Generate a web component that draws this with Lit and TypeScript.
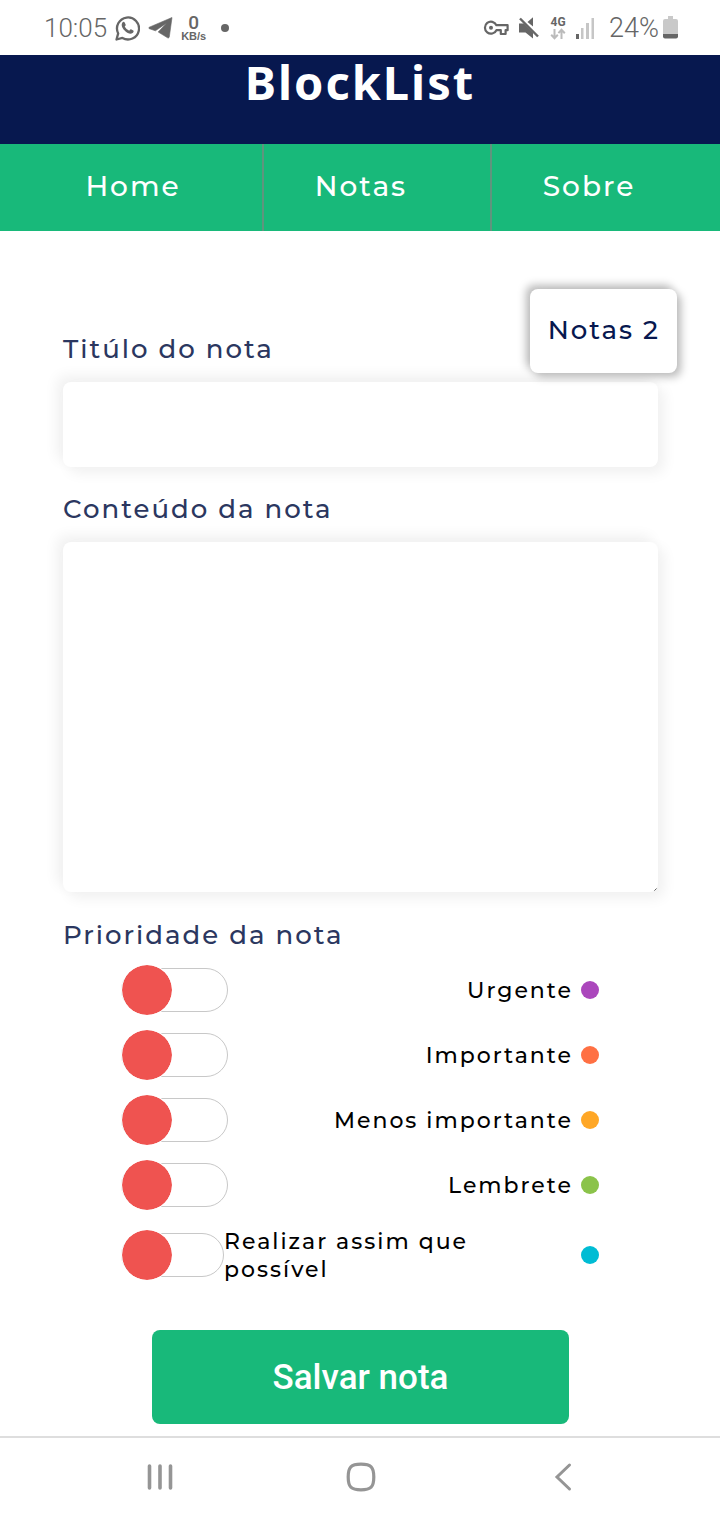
import { LitElement, html, css } from "lit";
import { customElement, state } from "lit/decorators.js";
import { classMap } from "lit/directives/class-map.js";

interface Priority {
  id: string;
  label: string;
}

const PRIORITIES: Priority[] = [
  { id: "urgente", label: "Urgente" },
  { id: "importante", label: "Importante" },
  { id: "menos", label: "Menos importante" },
  { id: "lembrete", label: "Lembrete" },
  { id: "possivel", label: "Realizar assim que possível" },
];

@customElement("status-bar")
class StatusBar extends LitElement {
  static styles = css`
    :host {
      display: flex;
      justify-content: space-between;
      align-items: center;
      box-sizing: border-box;
      height: 55px;
      padding: 0 42px 0 44px;
      background: #fff;
      color: #666;
      font-family: Roboto, sans-serif;
    }
    .group {
      display: flex;
      align-items: center;
    }
    .left {
      gap: 8px;
    }
    .right {
      gap: 9px;
    }
    .time {
      font-size: 26px;
      line-height: 32px;
      font-weight: 300;
    }
    .charge {
      display: flex;
      align-items: center;
      gap: 4px;
      padding-left: 5px;
      font-size: 27px;
      line-height: 32px;
      font-weight: 300;
    }
    .rate {
      display: flex;
      flex-direction: column;
      align-items: center;
      font-family: "Liberation Sans", sans-serif;
      font-weight: 700;
      font-size: 11px;
      line-height: 10px;
    }
    .rate b {
      font-family: Roboto, sans-serif;
      font-weight: 500;
      font-size: 19px;
      line-height: 17px;
    }
    .dot {
      width: 8px;
      height: 8px;
      margin-left: 7px;
      border-radius: 50%;
      background: #666;
    }
    .network {
      display: flex;
      flex-direction: column;
      align-items: center;
      padding-left: 1px;
      font-weight: 700;
      font-size: 12px;
      line-height: 12px;
    }
    svg {
      display: block;
    }
  `;

  render() {
    return html`
      <div class="group left">
        <span class="time">10:05</span>
        <svg width="25" height="26" viewBox="0 0 25 26" fill="none">
          <path d="M1.5 24.5 3.2 18.4A11 11 0 1 1 7.4 22.9Z" stroke="#666" stroke-width="2.3" stroke-linejoin="round" />
          <path d="M7.4 7.6C8.2 6.5 9.3 6.7 9.8 7.7L10.7 9.7C10.9 10.4 10 11.1 9.7 11.6C10.8 13.6 12.1 14.8 14.2 15.7C14.8 15.1 15.3 14.1 16 14.3L18.3 15.5C19 16 18.5 17.5 17.6 18.1C15.4 19.5 12.5 18.2 10.3 16.3C8 14.2 5.4 10.6 7.4 7.6Z" fill="#666" />
        </svg>
        <svg width="25" height="24" viewBox="0 0 25 24">
          <path d="M24 1.5 1.3 11.2C.6 11.6.7 12.4 1.4 12.7L7.4 14.8 18.5 7.2 10.2 16 19.6 21.8C20.4 22.2 21.1 21.8 21.3 20.9Z" fill="#666" stroke="#666" stroke-width=".6" />
        </svg>
        <span class="rate"><b>0</b>KB/s</span>
        <span class="dot"></span>
      </div>
      <div class="group right">
        <svg width="26" height="18" viewBox="0 0 26 18" fill="none">
          <path d="M13.4 6.2H24.6V11.2H22.6V15H17.8V11.2H13.4A6 6 0 1 1 13.4 6.2Z" stroke="#666" stroke-width="2.2" stroke-linejoin="round" />
          <circle cx="8" cy="8.7" r="2" fill="#666" />
        </svg>
        <svg width="22" height="24" viewBox="0 0 22 24">
          <path d="M1 7.5H6L15 16.5V22.5L7.5 16.5H1ZM9.5 6 15 1.2V10.5Z" fill="#666" />
          <path d="M2 2.5 20 20.5" stroke="#666" stroke-width="2.4" />
        </svg>
        <span class="network">
          4G
          <svg width="16" height="12" viewBox="0 0 16 12" fill="none" stroke="#bbb" stroke-width="2">
            <path d="M4.5 1V10M1.2 6.8 4.5 10.2 7.8 6.8M11.5 11V2M8.4 5.2 11.5 1.8 14.8 5.2" />
          </svg>
        </span>
        <svg width="20" height="22" viewBox="0 0 20 22">
          <rect x="1" y="17" width="3" height="5" fill="#666" />
          <path d="M6 11H8.5V22H6ZM11 6H14V22H11ZM16.5 1H19V22H16.5Z" fill="#c6c6c6" />
        </svg>
        <span class="charge">
          24%
          <svg width="15" height="23" viewBox="0 0 15 23">
            <path d="M5 0H10V3H13A2 2 0 0 1 15 5V18H0V5A2 2 0 0 1 2 3H5Z" fill="#c9c9c9" />
            <path d="M0 18H15V20.5A2 2 0 0 1 13 22.5H2A2 2 0 0 1 0 20.5Z" fill="#666" />
          </svg>
        </span>
      </div>
    `;
  }
}

@customElement("system-nav")
class SystemNav extends LitElement {
  static styles = css`
    :host {
      display: grid;
      grid-template-columns: repeat(3, 1fr);
      box-sizing: border-box;
      height: 84px;
      padding: 0 56px 4px 59px;
      border-top: 2px solid #dedede;
      background: #fff;
    }
    button {
      display: grid;
      place-items: center;
      padding: 0;
      border: 0;
      background: none;
    }
    svg {
      display: block;
      fill: none;
      stroke: #959595;
    }
  `;

  render() {
    return html`
      <button type="button" aria-label="Recentes">
        <svg width="30" height="30" viewBox="0 0 30 30" stroke-width="3.6" stroke-linecap="round">
          <path d="M4.5 4V26M15 4V26M25.5 4V26" />
        </svg>
      </button>
      <button type="button" aria-label="Início">
        <svg width="30" height="30" viewBox="0 0 30 30" stroke-width="3.2">
          <path d="M15 2.2C25 2.2 27.8 5 27.8 15S25 27.8 15 27.8 2.2 25 2.2 15 5 2.2 15 2.2Z" />
        </svg>
      </button>
      <button type="button" aria-label="Voltar">
        <svg width="18" height="30" viewBox="0 0 18 30" stroke-width="3" stroke-linecap="round">
          <path d="M15.5 3 3 15 15.5 27" />
        </svg>
      </button>
    `;
  }
}

@customElement("app-root")
class AppRoot extends LitElement {
  @state() private selected = "";

  static styles = css`
    :host {
      display: flex;
      flex-direction: column;
      min-height: 100vh;
      background: #fff;
      color: #07184f;
      font-family: Montserrat, Inter, sans-serif;
      font-weight: 500;
      letter-spacing: 2px;
    }
    status-bar,
    system-nav {
      letter-spacing: normal;
    }
    header {
      box-sizing: border-box;
      height: 89px;
      background: #07184f;
      color: #fff;
      text-align: center;
    }
    h1 {
      margin: 0;
      font-family: "M PLUS Rounded 1c", "Noto Sans", sans-serif;
      font-size: 47px;
      line-height: 55px;
      font-weight: 700;
    }
    .menu {
      display: grid;
      grid-template-columns: repeat(3, 1fr);
      padding-left: 36px;
      background: #18b97a;
    }
    .menu a {
      padding: 24px 32px 27px 0;
      border-right: 2px solid #5f957e;
      color: #fff;
      font-size: 28px;
      line-height: 36px;
      text-align: center;
      text-decoration: none;
    }
    .menu a:last-child {
      border-right-color: transparent;
    }
    main {
      position: relative;
      flex: 1;
      padding: 100px 62px 12px 63px;
    }
    .count {
      position: absolute;
      top: 58px;
      right: 43px;
      box-sizing: border-box;
      padding: 23px 17px 25px 18px;
      border-radius: 8px;
      background: #fff;
      box-shadow: 4px 4px 8px #bbb, -4px -4px 8px #bbb;
      font-size: 26px;
      line-height: 36px;
    }
    form {
      display: flex;
      flex-direction: column;
    }
    .caption {
      margin: 0;
      padding: 0;
      color: #2b3760;
      font-size: 26px;
      line-height: 36px;
    }
    .field {
      box-sizing: border-box;
      width: 100%;
      margin: 15px 0 24px;
      padding: 16px;
      border: 0;
      border-radius: 8px;
      outline: 0;
      background: #fff;
      box-shadow: 6px 6px 14px #f0f0f0, -6px -6px 14px #f0f0f0;
      font: inherit;
      font-size: 26px;
      letter-spacing: inherit;
      color: inherit;
    }
    input.field {
      height: 85px;
    }
    textarea.field {
      display: block;
      height: 350px;
      margin-bottom: 25px;
      resize: none;
      background: #fff
        url("data:image/svg+xml,%3Csvg xmlns='http://www.w3.org/2000/svg' width='3' height='3'%3E%3Cpath d='M2 0h1v1H2zM1 1h1v1H1zM0 2h1v1H0zM2 2h1v1H2z' fill='%23444'/%3E%3C/svg%3E")
        right 1px bottom 1px no-repeat;
    }
    .options {
      display: flex;
      flex-direction: column;
      gap: 15px;
      padding: 12px 59px 0 58px;
      color: #000;
    }
    .option {
      display: flex;
      align-items: center;
      min-height: 50px;
    }
    .option label {
      margin-left: auto;
      padding: 3px 0 1px;
      font-size: 22px;
      line-height: 28px;
    }
    .switch {
      position: relative;
      appearance: none;
      flex: 0 0 107px;
      box-sizing: border-box;
      height: 44px;
      margin: 0;
      border: 1px solid #c8c8c8;
      border-radius: 22px;
      background: #fff;
    }
    .switch::before {
      content: "";
      position: absolute;
      top: -5px;
      left: -1px;
      width: 50px;
      height: 50px;
      border: 1px solid #fff;
      border-radius: 50%;
      background: #ef5350;
      background-clip: padding-box;
    }
    .switch:checked::before {
      left: auto;
      right: 0;
      background-color: #18b97a;
    }
    .dot {
      flex: 0 0 18px;
      height: 18px;
      margin-left: 8px;
      border-radius: 50%;
    }
    .urgente { background: #ab47bc; }
    .importante { background: #ff7043; }
    .menos { background: #ffa726; }
    .lembrete { background: #8bc34a; }
    .possivel { background: #00bcd4; }
    .option.long .switch {
      flex-basis: 103px;
    }
    .option.long label {
      flex: 1;
      margin: 0;
      padding-right: 60px;
    }
    .save {
      align-self: center;
      width: 70%;
      height: 94px;
      margin-top: 45px;
      border: 0;
      border-radius: 8px;
      background: #18b97a;
      color: #fff;
      font-family: Roboto, sans-serif;
      font-size: 35px;
      font-weight: 500;
    }
  `;

  private choose(id: string, event: Event) {
    this.selected = (event.target as HTMLInputElement).checked ? id : "";
  }

  render() {
    return html`
      <status-bar></status-bar>
      <header><h1>BlockList</h1></header>
      <nav class="menu">
        <a href="#home">Home</a>
        <a href="#notas">Notas</a>
        <a href="#sobre">Sobre</a>
      </nav>
      <main>
        <div class="count">Notas 2</div>
        <form @submit=${(e: Event) => e.preventDefault()}>
          <label class="caption" for="titulo">Titúlo do nota</label>
          <input class="field" id="titulo" type="text" />
          <label class="caption" for="conteudo">Conteúdo da nota</label>
          <textarea class="field" id="conteudo"></textarea>
          <div class="caption" id="prioridade">Prioridade da nota</div>
          <div class="options" role="group" aria-labelledby="prioridade">
            ${PRIORITIES.map(
              (p) => html`
                <div class=${classMap({ option: true, long: p.label.length > 20 })}>
                  <input
                    class="switch"
                    type="checkbox"
                    id=${p.id}
                    .checked=${this.selected === p.id}
                    @change=${(e: Event) => this.choose(p.id, e)}
                  />
                  <label for=${p.id}>${p.label}</label>
                  <span class=${classMap({ dot: true, [p.id]: true })}></span>
                </div>
              `
            )}
          </div>
          <button class="save" type="submit">Salvar nota</button>
        </form>
      </main>
      <system-nav></system-nav>
    `;
  }
}
